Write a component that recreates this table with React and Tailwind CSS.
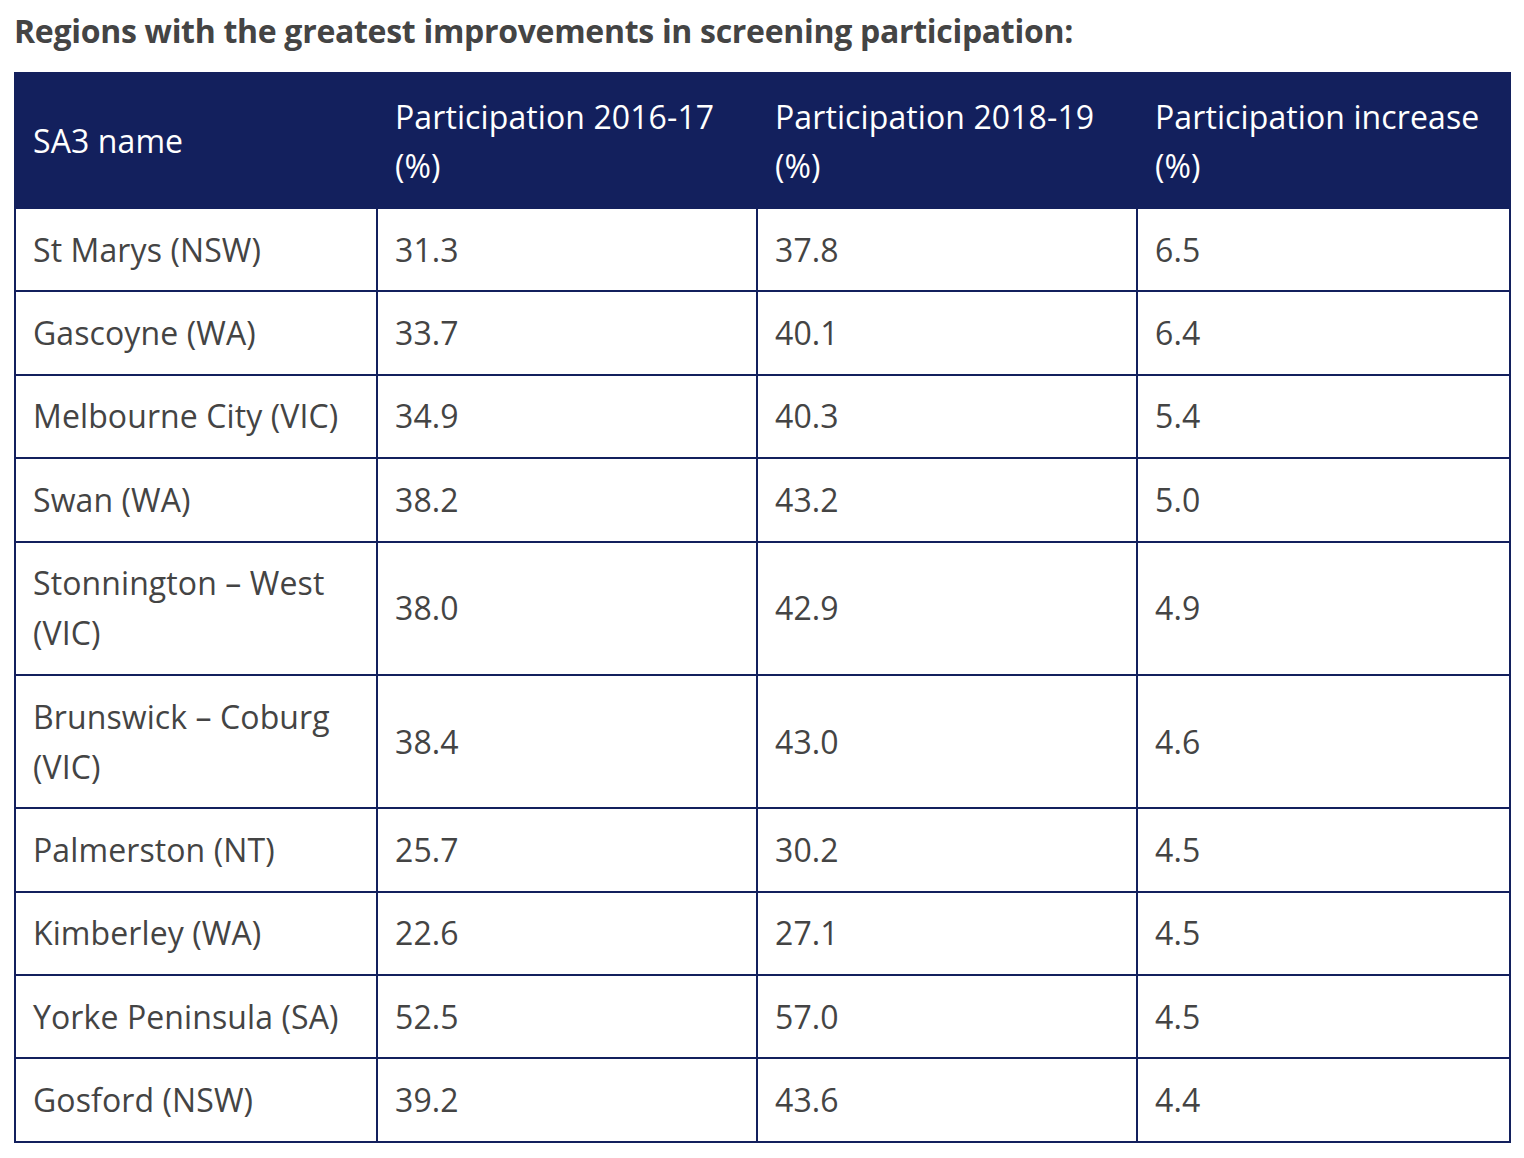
import React from 'react';

const rows = [
  ['St Marys (NSW)', '31.3', '37.8', '6.5'],
  ['Gascoyne (WA)', '33.7', '40.1', '6.4'],
  ['Melbourne City (VIC)', '34.9', '40.3', '5.4'],
  ['Swan (WA)', '38.2', '43.2', '5.0'],
  ['Stonnington – West (VIC)', '38.0', '42.9', '4.9'],
  ['Brunswick – Coburg (VIC)', '38.4', '43.0', '4.6'],
  ['Palmerston (NT)', '25.7', '30.2', '4.5'],
  ['Kimberley (WA)', '22.6', '27.1', '4.5'],
  ['Yorke Peninsula (SA)', '52.5', '57.0', '4.5'],
  ['Gosford (NSW)', '39.2', '43.6', '4.4'],
];

const headers = ['SA3 name', 'Participation 2016-17 (%)', 'Participation 2018-19 (%)', 'Participation increase (%)'];

export default function App() {
  return (
    <div className="bg-white min-h-[1158px] px-[14px] pt-[11px] text-[#444444]" style={{ fontFamily: '"Open Sans", "Noto Sans", sans-serif' }}>
      {/* Heading */}
      <h2 className="text-[32px] font-bold leading-[40px] mb-[21px] tracking-[-0.3px]">
        Regions with the greatest improvements in screening participation:
      </h2>

      <table className="w-[1497px] border-collapse table-fixed text-[32px] leading-[50px] tracking-[0.1px]">
        <colgroup>
          <col className="w-[362px]" />
          <col className="w-[380px]" />
          <col className="w-[380px]" />
          <col />
        </colgroup>
        <thead>
          <tr className="bg-[#13205d] text-white">
            {headers.map((h, i) => (
              <th key={i} className="text-left font-normal align-middle pl-[17px] pr-[12px] h-[135px] border-2 border-[#13205d] leading-[49px]">
                {h}
              </th>
            ))}
          </tr>
        </thead>
        <tbody>
          {rows.map((r, idx) => (
            <tr key={idx}>
              {r.map((c, i) => (
                <td key={i} className="border-2 border-[#13205d] pl-[17px] pr-[12px] py-[15.7px] align-middle">
                  {c}
                </td>
              ))}
            </tr>
          ))}
        </tbody>
      </table>
    </div>
  );
}
